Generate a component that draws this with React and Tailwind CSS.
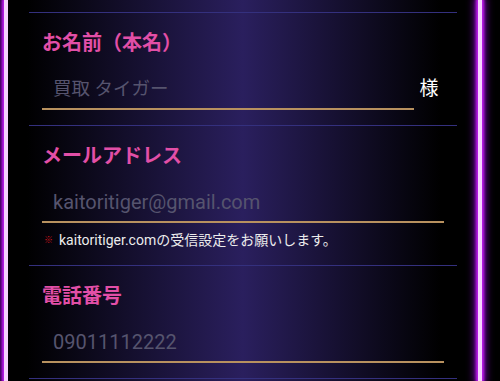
import React from 'react';

const font = { fontFamily: 'Roboto, "Noto Sans CJK JP", sans-serif' };

const NeonLine = () => (
  <div className="w-[4px] shrink-0 bg-[#f8d2ff] shadow-[0_0_3px_2px_#c21ef0,0_0_9px_3px_#7d00b8]" />
);

const Field = ({ label, placeholder, type = 'text', suffix, note, last, small }) => (
  <div className={`border-t border-[#34307e] px-[13px] pt-[15px] pb-[15px] ${last ? 'border-b' : ''}`}>
    <label className="block text-[20px] leading-[30px] font-bold text-[#e24fa7]">{label}</label>
    <div className="mt-[12px] flex">
      <input
        type={type}
        placeholder={placeholder}
        className={`h-[40px] min-w-0 flex-1 border-b-2 border-[#b8915f] bg-transparent pl-[11px] text-white outline-none placeholder:text-[#56546e] ${small ? 'text-[18.5px]' : 'text-[20px]'}`}
      />
      {suffix && (
        <span className="flex w-[30px] shrink-0 items-center justify-center pb-[2px] text-[19px] text-white">
          {suffix}
        </span>
      )}
    </div>
    {note && (
      <p className="mt-[7px] flex items-center text-[14px] leading-[20px] text-[#ececec]">
        <span className="mr-[6px] ml-[2px] text-[9px] text-[#d0141c]">※</span>
        {note}
      </p>
    )}
  </div>
);

export default function App() {
  return (
    <div className="flex h-[381px] w-[500px] overflow-hidden bg-black" style={font}>
      <div className="w-[4px] shrink-0" />
      <NeonLine />
      <main className="flex-1 bg-[linear-gradient(90deg,#000_4%,#2a1f5e_50%,#000_92%)] px-[21px] pt-[12px]">
        <Field label="お名前（本名）" placeholder="買取 タイガー" suffix="様" small />
        <Field
          label="メールアドレス"
          type="email"
          placeholder="kaitoritiger@gmail.com"
          note="kaitoritiger.comの受信設定をお願いします。"
        />
        <Field label="電話番号" type="tel" placeholder="09011112222" last />
      </main>
      <NeonLine />
      <div className="w-[18px] shrink-0" />
    </div>
  );
}
